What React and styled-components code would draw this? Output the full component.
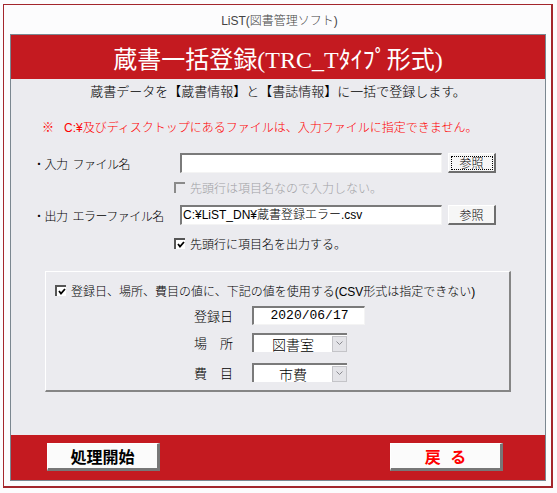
import styled, { createGlobalStyle } from 'styled-components';

// ページ全体の初期化
const GlobalStyle = createGlobalStyle`
  body {
    margin: 0;
    background: #fcfcfd;
    font-family: "Liberation Sans", "Noto Sans CJK JP", sans-serif;
    font-weight: 300;
    color: #000;
  }
`;

const RED = '#c41a20';
const PANEL = '#ebebef';

// 外枠 (ウィンドウ)
const Frame = styled.div`
  box-sizing: border-box;
  margin: 4px 0 0 3px;
  width: 550px;
  height: 484px;
  border: 1px solid #a3262c;
  border-right-width: 2px;
  border-bottom-width: 2px;
  padding: 0 6px;
  display: flex;
  flex-direction: column;
`;

const WindowTitle = styled.div`
  height: 29px;
  display: flex;
  align-items: center;
  justify-content: center;
  font-size: 12px;
  color: #444;
  padding-left: 4px;
`;

const Panel = styled.div`
  box-sizing: border-box;
  width: 536px;
  height: 447px;
  border: 1px solid #7b8790;
  display: flex;
  flex-direction: column;
`;

const Header = styled.div`
  height: 44px;
  background: ${RED};
  display: flex;
  align-items: center;
  justify-content: center;
  color: #fff;
  font-family: "Liberation Serif", "Noto Sans CJK JP", serif;
  font-weight: 400;
  font-size: 24px;
`;

const Body = styled.div`
  flex: 1;
  background: ${PANEL};
  display: flex;
  flex-direction: column;
`;

const Lead = styled.div`
  margin-top: 4px;
  font-size: 13px;
  line-height: 18px;
  text-align: center;
`;

const Notice = styled.div`
  margin: 19px 0 0 31px;
  color: #ff0000;
  font-size: 12px;
  line-height: 16px;
`;

const Mark = styled.span`
  margin-right: 10px;
`;

// ファイル指定の行
const FileRow = styled.div`
  display: grid;
  grid-template-columns: 141px 262px 48px;
  column-gap: 6px;
  align-items: center;
  margin-top: ${(p) => p.$gap}px;
  padding-left: 22px;
  height: 20px;
`;

const Label = styled.span`
  display: flex;
  gap: 5px;
  font-size: 12px;
  letter-spacing: -0.5px;
  white-space: nowrap;
`;

const TextBox = styled.div`
  box-sizing: border-box;
  height: 20px;
  background: #fff;
  border-top: 2px solid #7a7a7a;
  border-left: 2px solid #7a7a7a;
  border-right: 1px solid #f4f4f4;
  border-bottom: 1px solid #f4f4f4;
  font-size: 12px;
  line-height: 17px;
  padding-left: 1px;
  white-space: nowrap;
  overflow: hidden;
`;

const BrowseButton = styled.div`
  box-sizing: border-box;
  height: 20px;
  background: #f6f6f6;
  border-top: 1px solid #fff;
  border-left: 1px solid #fff;
  border-right: 2px solid #6e6e6e;
  border-bottom: 2px solid #6e6e6e;
  display: flex;
  align-items: center;
  justify-content: center;
  font-size: 12px;
  outline: ${(p) => (p.$focused ? '1px dotted #000' : 'none')};
  outline-offset: -4px;
`;

const CheckRow = styled.div`
  display: flex;
  align-items: center;
  gap: 5px;
  height: 16px;
  margin-top: ${(p) => p.$gap}px;
  padding-left: ${(p) => p.$indent}px;
  font-size: 12px;
  color: ${(p) => (p.$disabled ? '#a2a2a6' : '#000')};
`;

const Box = styled.span`
  box-sizing: border-box;
  width: 11px;
  height: 11px;
  flex: none;
  display: flex;
  align-items: center;
  justify-content: center;
  border-top: 2px solid ${(p) => (p.$disabled ? '#8a8a8a' : '#555')};
  border-left: 2px solid ${(p) => (p.$disabled ? '#8a8a8a' : '#555')};
  background: ${(p) => (p.$disabled ? 'transparent' : '#fff')};
`;

// 既定値のグループ
const GroupBox = styled.div`
  box-sizing: border-box;
  margin: 20px 0 0 34px;
  width: 466px;
  height: 121px;
  border-top: 1px solid #fff;
  border-left: 1px solid #fff;
  border-right: 2px solid #858585;
  border-bottom: 2px solid #858585;
  padding-top: 10px;
`;

const FieldRow = styled.div`
  display: grid;
  grid-template-columns: 187px auto;
  column-gap: 19px;
  align-items: center;
  margin-top: ${(p) => p.$gap}px;
`;

const FieldLabel = styled.span`
  font-size: 13px;
  text-align: right;
`;

const DateBox = styled(TextBox)`
  width: 113px;
  height: 19px;
  font-family: "Liberation Mono", monospace;
  font-size: 13px;
  line-height: 16px;
  text-align: center;
`;

const Select = styled.div`
  box-sizing: border-box;
  width: 95px;
  height: 19px;
  background: #fff;
  border-top: 2px solid #7a7a7a;
  border-left: 2px solid #7a7a7a;
  display: flex;
  align-items: center;
`;

const SelectValue = styled.span`
  flex: 1;
  text-align: center;
  font-size: 14px;
`;

const DropButton = styled.span`
  box-sizing: border-box;
  width: 15px;
  height: 16px;
  background: #e4e4e8;
  border: 1px solid #c4c4c8;
  display: flex;
  align-items: center;
  justify-content: center;
`;

const Footer = styled.div`
  box-sizing: border-box;
  height: 45px;
  background: ${RED};
  display: flex;
  justify-content: space-between;
  align-items: flex-start;
  padding: 8px 42px 0 36px;
`;

const ActionButton = styled.div`
  box-sizing: border-box;
  width: 113px;
  height: 28px;
  background: #fbfbfb;
  border-top: 1px solid #fff;
  border-left: 1px solid #fff;
  border-right: 3px solid #777;
  border-bottom: 3px solid #777;
  display: flex;
  align-items: center;
  justify-content: center;
  font-family: "Noto Sans CJK JP", sans-serif;
  font-weight: 700;
  font-size: 16px;
  word-spacing: 6px;
  color: ${(p) => (p.$danger ? '#ff0000' : '#000')};
`;

const CheckMark = () => (
  <svg width="8" height="7" viewBox="0 0 8 7">
    <path d="M1 3 L3 5.5 L7 1" fill="none" stroke="#000" strokeWidth="1.8" />
  </svg>
);

const Chevron = () => (
  <svg width="7" height="5" viewBox="0 0 7 5">
    <path d="M0.5 0.5 L3.5 3.5 L6.5 0.5" fill="none" stroke="#8a8a90" strokeWidth="1" />
  </svg>
);

const App = () => {
  return (
    <>
      <GlobalStyle />
      <Frame>
        <WindowTitle>LiST(図書管理ソフト)</WindowTitle>
        <Panel>
          <Header>蔵書一括登録(TRC_Tﾀｲﾌﾟ形式)</Header>
          <Body>
            <Lead>蔵書データを【蔵書情報】と【書誌情報】に一括で登録します。</Lead>
            <Notice>
              <Mark>※</Mark>C:¥及びディスクトップにあるファイルは、入力ファイルに指定できません。
            </Notice>

            <FileRow $gap={17}>
              <Label>
                <span>・入力</span>
                <span>ファイル名</span>
              </Label>
              <TextBox />
              <BrowseButton $focused>参照</BrowseButton>
            </FileRow>
            <CheckRow $gap={6} $indent={163} $disabled>
              <Box $disabled />
              先頭行は項目名なので入力しない。
            </CheckRow>

            <FileRow $gap={10}>
              <Label>
                <span>・出力</span>
                <span>エラーファイル名</span>
              </Label>
              <TextBox>C:¥LiST_DN¥蔵書登録エラー.csv</TextBox>
              <BrowseButton>参照</BrowseButton>
            </FileRow>
            <CheckRow $gap={10} $indent={163}>
              <Box>
                <CheckMark />
              </Box>
              先頭行に項目名を出力する。
            </CheckRow>

            <GroupBox>
              <CheckRow $gap={0} $indent={9}>
                <Box>
                  <CheckMark />
                </Box>
                登録日、場所、費目の値に、下記の値を使用する(CSV形式は指定できない)
              </CheckRow>
              <FieldRow $gap={8}>
                <FieldLabel>登録日</FieldLabel>
                <DateBox>2020/06/17</DateBox>
              </FieldRow>
              <FieldRow $gap={8}>
                <FieldLabel>場　所</FieldLabel>
                <Select>
                  <SelectValue>図書室</SelectValue>
                  <DropButton>
                    <Chevron />
                  </DropButton>
                </Select>
              </FieldRow>
              <FieldRow $gap={11}>
                <FieldLabel>費　目</FieldLabel>
                <Select>
                  <SelectValue>市費</SelectValue>
                  <DropButton>
                    <Chevron />
                  </DropButton>
                </Select>
              </FieldRow>
            </GroupBox>
          </Body>
          <Footer>
            <ActionButton>処理開始</ActionButton>
            <ActionButton $danger>戻 る</ActionButton>
          </Footer>
        </Panel>
      </Frame>
    </>
  );
};

export default App;
